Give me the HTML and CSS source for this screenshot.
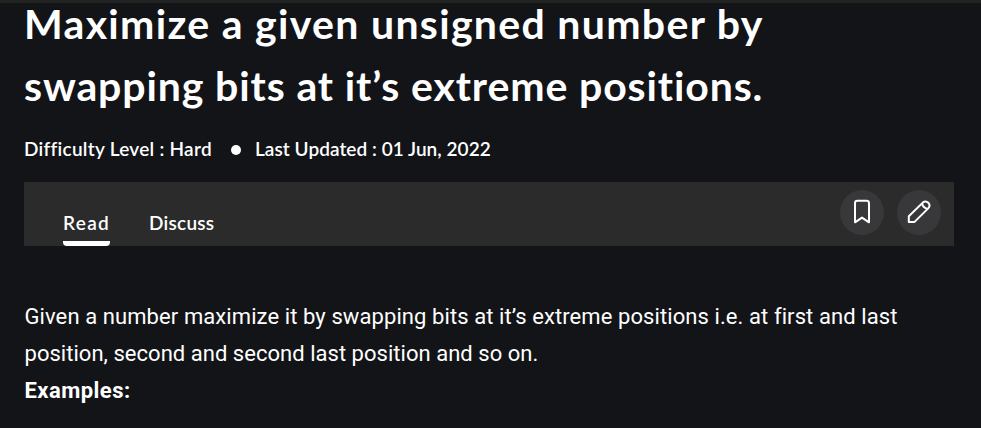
FILE: index.html
```
<!DOCTYPE html>
<html lang="en">
<head>
<meta charset="utf-8">
<title>Maximize a given unsigned number</title>
<link rel="stylesheet" href="styles.css">
</head>
<body>
<main class="article">
  <h1 class="title"><span class="title-top">Maximize a given unsigned number by</span><br><span class="title-bottom">swapping bits at it’s extreme positions.</span></h1>
  <div class="meta">
    <span class="level">Difficulty Level : Hard</span>
    <span class="dot"></span>
    <span class="updated">Last Updated : 01 Jun, 2022</span>
  </div>
  <nav class="toolbar">
    <div class="tabs">
      <a class="tab active"><span class="read">Read</span></a>
      <a class="tab"><span class="discuss">Discuss</span></a>
    </div>
    <div class="actions">
      <button class="action" aria-label="Bookmark">
        <svg width="44" height="45" viewBox="0 0 44 45"><path d="M15 32.3V13.2Q15 10.8 17.4 10.8H26.6Q29 10.8 29 13.2V32.3L22 27.6Z"/></svg>
      </button>
      <button class="action" aria-label="Edit">
        <svg width="44" height="45" viewBox="0 0 44 45"><path d="M11.8 32.1V26.2L25.8 12.6Q28.7 10.2 31.3 12.8Q33.8 15.5 31.2 18.4L17.3 32.1ZM25.2 13.2Q25.8 18.2 30.7 18.9"/></svg>
      </button>
    </div>
  </nav>
  <div class="content">
    <p><span class="body-top">Given a number maximize it by swapping bits at it’s extreme positions i.e. at first and last</span><br><span class="body-bottom">position, second and second last position and so on.</span></p>
    <p><strong>Examples:</strong></p>
  </div>
</main>
</body>
</html>
```
FILE: styles.css
```
* { box-sizing: border-box; }
body {
  margin: 0;
  height: 428px;
  overflow: hidden;
  background: #131418;
  color: #fff;
  border-top: 3px solid #222220;
  font-family: Lato, sans-serif;
}
.article { width: 930px; margin-left: 24px; }
.title {
  margin: -10px 0 0;
  font-size: 41px;
  line-height: 62px;
  font-weight: 700;
  white-space: nowrap;
}
.title-top { letter-spacing: 1.31px; }
.title-bottom { letter-spacing: 0.88px; }
.meta {
  display: flex;
  align-items: center;
  height: 30px;
  margin-top: 17px;
  font-size: 19px;
  font-weight: 600;
  white-space: nowrap;
}
.level { width: 207px; letter-spacing: 0.27px; line-height: 28px; }
.dot { width: 10px; height: 10px; margin-top: 2px; border-radius: 50%; background: #fff; }
.updated { margin-left: 14px; letter-spacing: 0.05px; line-height: 28px; }
.toolbar {
  display: flex;
  justify-content: space-between;
  height: 64px;
  margin-top: 18px;
  padding: 8px 13px 0 39px;
  background: #2b2b2b;
}
.tabs { display: flex; gap: 39px; height: 56px; }
.tab {
  width: 47px;
  padding-top: 18px;
  font-size: 19px;
  line-height: 30px;
  font-weight: 600;
  white-space: nowrap;
}
.read { letter-spacing: 1.35px; }
.discuss { letter-spacing: 0.25px; }
.active {
  background: linear-gradient(#fff, #fff) bottom / 100% 5px no-repeat;
  border-radius: 0 0 4px 4px;
}
.actions { display: flex; gap: 13px; }
.action {
  width: 44px;
  height: 45px;
  padding: 0;
  border: 0;
  border-radius: 50%;
  background: #38383a;
}
.action svg {
  display: block;
  fill: none;
  stroke: #fff;
  stroke-width: 2;
  stroke-linejoin: round;
}
.content {
  margin-top: 52px;
  padding-left: 0.5px;
  font-family: Roboto, sans-serif;
  font-size: 22px;
  line-height: 37px;
  white-space: nowrap;
}
.content p { margin: 0; }
.body-top { letter-spacing: 0.09px; }
.body-bottom { letter-spacing: 0.03px; }
.content strong { letter-spacing: 0.45px; }
```
